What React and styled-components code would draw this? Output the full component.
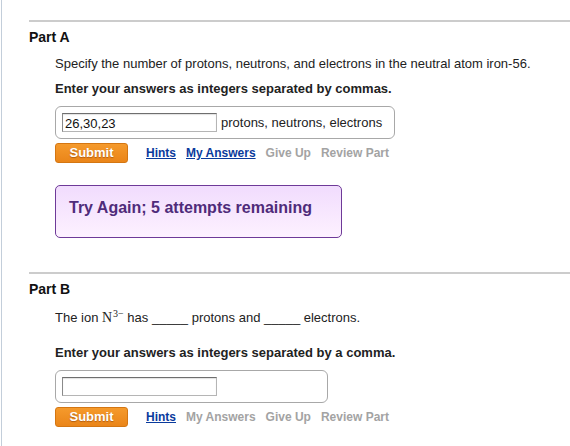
import React from "react";
import styled, { createGlobalStyle } from "styled-components";

const Global = createGlobalStyle`
  html, body { margin: 0; padding: 0; background: #fff; }
  body { font-family: "Liberation Sans", Arial, sans-serif; color: #222; }
`;

const Page = styled.div`
  width: 570px;
  height: 446px;
  overflow: hidden;
  box-sizing: border-box;
  border-left: 1px solid #c3ceda;
  margin-left: 1px;
  padding-top: 20px;
  padding-left: 27px;
`;

const Section = styled.section`
  border-top: 2px solid #cccccc;
  padding-top: 7px;
  margin-bottom: ${(p) => p.$mb || 0}px;
`;

const Heading = styled.h2`
  margin: 0;
  font-size: 14px;
  line-height: 16px;
  font-weight: bold;
  color: #111;
`;

const Body = styled.div`
  padding-left: 26px;
`;

const Text = styled.p`
  margin: ${(p) => p.$mt || 0}px 0 0;
  font-size: 13px;
  line-height: 15px;
  color: #222;
  font-weight: ${(p) => (p.$bold ? "bold" : "normal")};
`;

const Math = styled.span`
  font-family: "Liberation Serif", "Times New Roman", serif;
  font-size: 14px;
  line-height: 0;
`;

const Sup = styled.sup`
  font-size: 10px;
  line-height: 0;
  vertical-align: 5px;
  margin-left: 1px;
`;

const AnswerBox = styled.div`
  margin-top: 10px;
  width: ${(p) => p.$w}px;
  box-sizing: border-box;
  border: 1px solid #a8a8a8;
  border-radius: 6px;
  padding: 6px;
  display: flex;
  align-items: center;
  gap: 4px;
`;

const Input = styled.input`
  width: 155px;
  height: 19px;
  box-sizing: border-box;
  margin: 0;
  padding: 1px 2px 0;
  border: 1px solid #b5b5b5;
  border-top-color: #6e6e6e;
  border-left-color: #8a8a8a;
  box-shadow: inset 0 1px 1px rgba(0, 0, 0, 0.12);
  font-family: "Liberation Sans", Arial, sans-serif;
  font-size: 13px;
  color: #111;
  background: #fff;
  outline: none;
`;

const Units = styled.span`
  font-size: 13px;
  color: #222;
`;

const ActionRow = styled.div`
  margin-top: 4px;
  display: flex;
  align-items: center;
`;

const SubmitButton = styled.button`
  width: 73px;
  height: 20px;
  box-sizing: border-box;
  margin: 0 18px 0 0;
  padding: 0;
  border: 1px solid #d47612;
  border-radius: 3px;
  background: linear-gradient(#f59a2c, #ea8519);
  color: #fff;
  font-family: "Liberation Sans", Arial, sans-serif;
  font-weight: bold;
  font-size: 13px;
  line-height: 18px;
  text-shadow: 0 1px 1px rgba(120, 50, 0, 0.5);
  cursor: pointer;
`;

const Links = styled.div`
  display: flex;
  gap: 10px;
`;

const ActionLink = styled.a`
  font-size: 12px;
  font-weight: bold;
  line-height: 14px;
  color: ${(p) => (p.$active ? "#0a3a9c" : "#a3a3a3")};
  text-decoration: ${(p) => (p.$active ? "underline" : "none")};
  cursor: ${(p) => (p.$active ? "pointer" : "default")};
`;

const Feedback = styled.div`
  margin-top: 22px;
  width: 287px;
  height: 53px;
  box-sizing: border-box;
  border: 1px solid #6e3a98;
  border-radius: 5px;
  background: linear-gradient(#f1dcfd, #fdf1ff);
  padding: 13px 13px 0;
  font-size: 16px;
  line-height: 18px;
  font-weight: bold;
  color: #4f2b7a;
`;

function Actions({ myAnswers }) {
  return (
    <ActionRow>
      <SubmitButton>Submit</SubmitButton>
      <Links>
        <ActionLink $active href="#">Hints</ActionLink>
        <ActionLink $active={myAnswers} href={myAnswers ? "#" : undefined}>My Answers</ActionLink>
        <ActionLink>Give Up</ActionLink>
        <ActionLink>Review Part</ActionLink>
      </Links>
    </ActionRow>
  );
}

export default function App() {
  return (
    <>
      <Global />
      <Page>
        <Section $mb={34}>
          <Heading>Part A</Heading>
          <Body>
            <Text $mt={11}>
              Specify the number of protons, neutrons, and electrons in the neutral atom iron-56.
            </Text>
            <Text $mt={10} $bold>
              Enter your answers as integers separated by commas.
            </Text>
            <AnswerBox $w={340}>
              <Input defaultValue="26,30,23" />
              <Units>protons, neutrons, electrons</Units>
            </AnswerBox>
            <Actions myAnswers />
            <Feedback>Try Again; 5 attempts remaining</Feedback>
          </Body>
        </Section>
        <Section>
          <Heading>Part B</Heading>
          <Body>
            <Text $mt={13}>
              The ion <Math>N<Sup>3−</Sup></Math> has _____ protons and _____ electrons.
            </Text>
            <Text $mt={20} $bold>
              Enter your answers as integers separated by a comma.
            </Text>
            <AnswerBox $w={273}>
              <Input />
            </AnswerBox>
            <Actions />
          </Body>
        </Section>
      </Page>
    </>
  );
}
